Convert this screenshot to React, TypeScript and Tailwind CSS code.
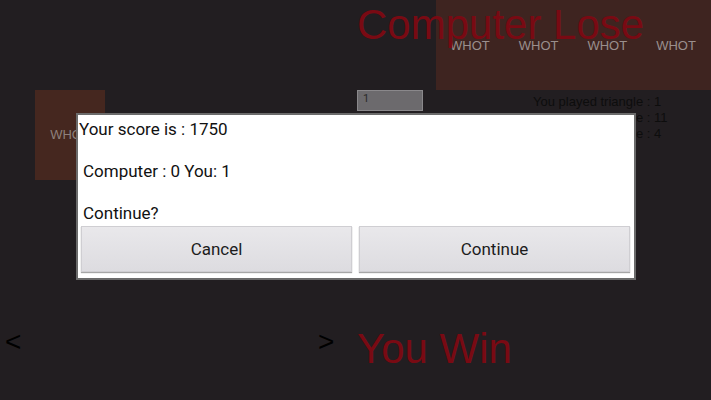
import React from 'react';

const whots = ['WHOT', 'WHOT', 'WHOT', 'WHOT'];

const played = [
  'You played triangle : 1',
  'You played triangle : 11',
  'You played triangle : 4',
];

const DialogButton: React.FC<{ label: string }> = ({ label }) => (
  <button className="flex-1 h-[46px] flex items-center justify-center bg-gradient-to-b from-[#e9e8eb] to-[#dddce0] border border-[#cfced2] shadow-[0_1px_1px_rgba(0,0,0,0.35)] text-[17px] text-[#1c1c1c]">
    {label}
  </button>
);

const App: React.FC = () => {
  return (
    <div className="relative w-[711px] h-[400px] overflow-hidden bg-[#221e21] flex flex-col font-['Roboto','Liberation_Sans',sans-serif]">
      {/* computer hand */}
      <div className="flex h-[90px] shrink-0">
        <div className="w-[436px] shrink-0" />
        <div className="flex-1 bg-[#3e2420] flex gap-[29px] pl-[14px] pt-[38px] font-['Liberation_Sans',sans-serif] text-[13px] text-[#9a8f8d]">
          {whots.map((w, i) => (
            <span key={i} className="leading-4">{w}</span>
          ))}
        </div>
      </div>

      {/* middle: pile, input, log */}
      <div className="flex h-[90px] shrink-0">
        <div className="ml-[35px] w-[70px] h-[90px] bg-[#45271f] flex items-center justify-center font-['Liberation_Sans',sans-serif] text-[13px] text-[#8e807c]">
          WHOT
        </div>
        <div className="ml-[252px] w-[66px] h-[21px] bg-[#6c6a6d] border border-[#8a888b] pl-[5px] text-[11px] leading-[16px] text-[#2a2a2a]">
          1
        </div>
        <div className="ml-[110px] pt-[4px] flex flex-col font-['Liberation_Sans',sans-serif] text-[13px] leading-4 text-[#0d0d0d]">
          {played.map((p, i) => (
            <span key={i}>{p}</span>
          ))}
        </div>
      </div>

      {/* bottom: arrows and result */}
      <div className="flex items-center mt-[146px] pl-[5px] font-['Liberation_Sans',sans-serif]">
        <span className="w-[313px] mb-[12px] text-[28px] leading-none text-black">&lt;</span>
        <span className="w-[39px] mb-[12px] text-[28px] leading-none text-black">&gt;</span>
        <span className="text-[42px] leading-none text-[#790a13] mt-[2px]">You Win</span>
      </div>

      {/* overlay title */}
      <div className="absolute left-[357px] top-[4px] font-['Liberation_Sans',sans-serif] text-[42px] leading-none text-[#790a13]">
        Computer Lose
      </div>

      {/* dialog */}
      <div className="absolute left-[76px] top-[113px] w-[560px] border-2 border-[#6b6b6b] bg-white flex flex-col text-[17px] leading-5 text-[#111]">
        <p className="mt-[4px] pl-[1px]">Your score is : 1750</p>
        <p className="mt-[22px] pl-[5px]">Computer : 0 You: 1</p>
        <p className="mt-[22px] pl-[5px]">Continue?</p>
        <div className="mt-[3px] mb-[6px] flex gap-[7px] pl-[3px] pr-[4px]">
          <DialogButton label="Cancel" />
          <DialogButton label="Continue" />
        </div>
      </div>
    </div>
  );
};

export default App;
